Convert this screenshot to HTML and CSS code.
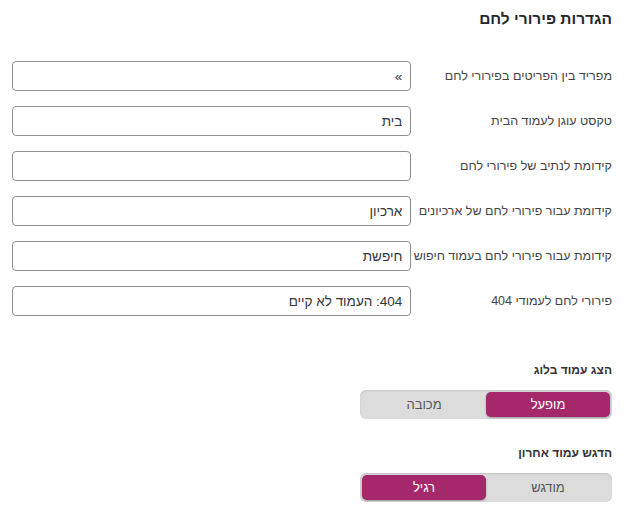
FILE: index.html
```html
<!DOCTYPE html>
<html lang="he" dir="rtl">
<head>
    <meta charset="UTF-8">
    <meta name="viewport" content="width=device-width, initial-scale=1.0">
    <title>הגדרות פירורי לחם</title>
    <link rel="stylesheet" href="styles.css">
</head>
<body>
    <h1>הגדרות פירורי לחם</h1>

    <div class="fields">
        <div class="field-row">
            <label for="sep">מפריד בין הפריטים בפירורי לחם</label>
            <input id="sep" type="text" value="»">
        </div>
        <div class="field-row">
            <label for="home">טקסט עוגן לעמוד הבית</label>
            <input id="home" type="text" value="בית">
        </div>
        <div class="field-row">
            <label for="prefix">קידומת לנתיב של פירורי לחם</label>
            <input id="prefix" type="text" value="">
        </div>
        <div class="field-row">
            <label for="archive">קידומת עבור פירורי לחם של ארכיונים</label>
            <input id="archive" type="text" value="ארכיון">
        </div>
        <div class="field-row">
            <label for="search">קידומת עבור פירורי לחם בעמוד חיפוש</label>
            <input id="search" type="text" value="חיפשת">
        </div>
        <div class="field-row">
            <label for="notfound">פירורי לחם לעמודי 404</label>
            <input id="notfound" type="text" value="404: העמוד לא קיים">
        </div>
    </div>

    <div class="toggle-section">
        <h3>הצג עמוד בלוג</h3>
        <div class="switch">
            <span class="option active">מופעל</span>
            <span class="option">מכובה</span>
        </div>
    </div>

    <div class="toggle-section">
        <h3>הדגש עמוד אחרון</h3>
        <div class="switch">
            <span class="option">מודגש</span>
            <span class="option active">רגיל</span>
        </div>
    </div>
</body>
</html>
```

FILE: styles.css
```css
body {
    font-family: "Liberation Sans", Arial, sans-serif;
    margin: 0;
    padding: 9px 14px 0 15px;
    color: #444;
    background: #fff;
}

h1 {
    font-size: 15.5px;
    font-weight: bold;
    color: #23282d;
    margin: 0 0 32px;
    line-height: 20px;
}

.fields {
    display: flex;
    flex-direction: column;
    gap: 15px;
    width: 600px;
}

.field-row {
    display: flex;
    align-items: center;
}

.field-row label {
    width: 200px;
    font-size: 12.5px;
    color: #444;
    white-space: nowrap;
}

.field-row input {
    width: 400px;
    height: 30px;
    box-sizing: border-box;
    border: 1px solid #8c8f94;
    border-radius: 4px;
    padding: 0 8px;
    font-family: inherit;
    font-size: 13.5px;
    color: #32373c;
    direction: rtl;
    margin-right: 1px;
}

.fields + .toggle-section {
    margin-top: 46px;
}

.toggle-section h3 {
    font-size: 12px;
    font-weight: bold;
    color: #333;
    margin: 0 0 12px;
    line-height: 16px;
}

.toggle-section + .toggle-section {
    margin-top: 26px;
}

.switch {
    display: flex;
    width: 252px;
    height: 29px;
    box-sizing: border-box;
    padding: 2px;
    background: #dcdcdc;
    border-radius: 6px;
    box-shadow: inset 0 1px 2px rgba(0, 0, 0, 0.12);
}

.switch .option {
    flex: 1;
    display: flex;
    align-items: center;
    justify-content: center;
    font-size: 13px;
    color: #555;
    border-radius: 5px;
}

.switch .option.active {
    background: #a4286a;
    color: #fff;
    box-shadow: 0 1px 2px rgba(0, 0, 0, 0.3);
}
```
